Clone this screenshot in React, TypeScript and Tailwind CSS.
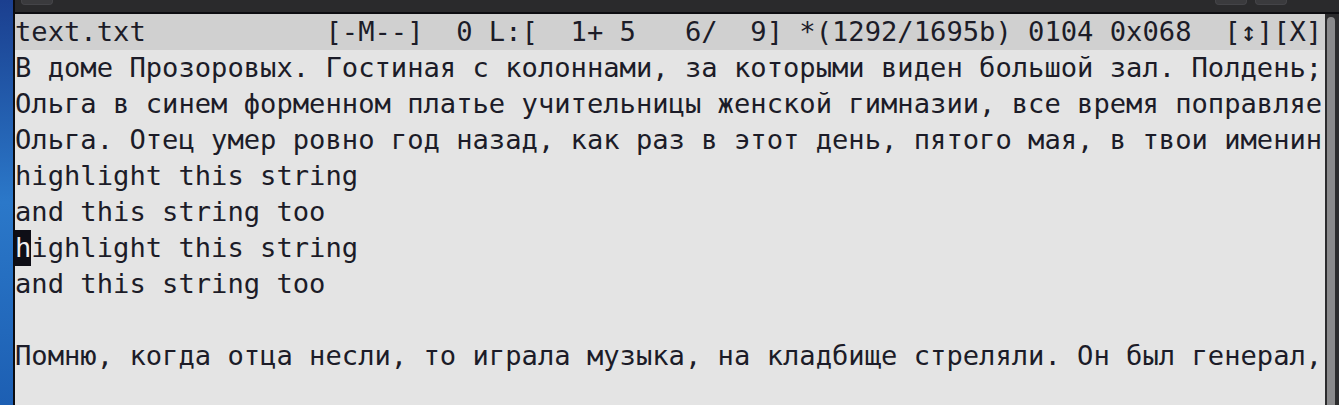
import React from 'react';

const lines: string[] = [
  'В доме Прозоровых. Гостиная с колоннами, за которыми виден большой зал. Полдень;',
  'Ольга в синем форменном платье учительницы женской гимназии, все время поправляе',
  'Ольга. Отец умер ровно год назад, как раз в этот день, пятого мая, в твои именин',
  'highlight this string',
  'and this string too',
  '',
  'and this string too',
  '',
  'Помню, когда отца несли, то играла музыка, на кладбище стреляли. Он был генерал,',
  '',
];

const header =
  'text.txt           [-M--]  0 L:[  1+ 5   6/  9] *(1292/1695b) 0104 0x068  [↕][X]';

const App: React.FC = () => {
  return (
    <div className="flex w-[1339px] h-[405px] overflow-hidden bg-[#e4e4e4]">
      {/* desktop peeking out on the left */}
      <div className="w-[13px] h-full bg-gradient-to-b from-[#1b3f8f] via-[#2b78c9] to-[#1d5fb3]" />
      <div className="w-[2px] h-full bg-[#0c0c10]" />

      <div className="flex-1 flex flex-col min-w-0">
        {/* window title strip */}
        <div className="h-[12px] bg-[#2a2a2c] flex items-start">
          <div className="ml-[6px] w-[32px] h-[5px] rounded-b-[4px] bg-[#3a3a3d] border border-t-0 border-[#444448]" />
          <div className="ml-auto w-[32px] h-[5px] rounded-b-[4px] bg-[#3a3a3d] border border-t-0 border-[#444448]" />
          <div className="ml-[8px] mr-[52px] w-[32px] h-[5px] rounded-b-[4px] bg-[#3a3a3d] border border-t-0 border-[#444448]" />
        </div>
        <div className="h-[2px] bg-[#0c0c10]" />

        <div className="flex flex-1 min-h-0">
          <div
            className="w-[1310px] overflow-hidden text-[#1c1c28] text-[27.15px] leading-[36px] whitespace-pre"
            style={{ fontFamily: '"DejaVu Sans Mono", "Liberation Mono", monospace' }}
          >
            <div className="h-[36px] bg-[#d0d0d0]">{header}</div>
            {lines.map((l, i) =>
              i === 5 ? (
                <div key={i} className="h-[36px]">
                  <span className="inline-block h-[36px] align-top bg-[#0e0e16] text-[#f0f0f0]">h</span>
                  ighlight this string
                </div>
              ) : (
                <div key={i} className="h-[36px]">{l}</div>
              )
            )}
          </div>

          {/* scrollbar */}
          <div className="flex-1 flex bg-[#2c2c2e]">
            <div className="w-[2px]" />
            <div className="mt-[3px] w-[8px] h-full rounded-t-[4px] bg-[#8a8a8c]" />
          </div>
        </div>
      </div>
    </div>
  );
};

export default App;
